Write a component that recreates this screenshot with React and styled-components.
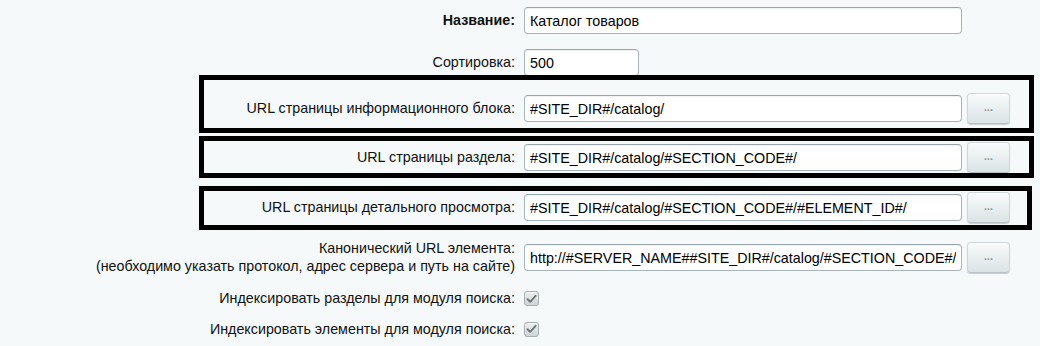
import React from 'react';
import styled, { createGlobalStyle } from 'styled-components';

const GlobalStyle = createGlobalStyle`
  html, body {
    margin: 0;
    padding: 0;
    background: #f5f9f9;
  }
  body {
    font-family: "Liberation Sans", Arial, sans-serif;
    font-size: 14.3px;
    color: #000;
  }
`;

const Form = styled.div`
  display: flex;
  flex-direction: column;
  align-items: flex-start;
  padding-top: 7px;
  width: 1040px;
  height: 346px;
  box-sizing: border-box;
  overflow: hidden;
`;

const Row = styled.div`
  display: grid;
  grid-template-columns: ${p => p.$label || 515}px auto;
  column-gap: 9px;
  align-items: center;
  margin-top: ${p => p.$top || 0}px;
`;

const Label = styled.label`
  text-align: right;
  line-height: 17.5px;
  color: #111;
  font-weight: ${p => (p.$bold ? 'bold' : 'normal')};
  white-space: nowrap;
`;

const Fields = styled.div`
  display: flex;
  align-items: center;
  gap: 5px;
`;

const TextInput = styled.input`
  box-sizing: border-box;
  width: ${p => p.$width || 438}px;
  height: 27px;
  padding: 0 5px;
  font-family: "Liberation Sans", Arial, sans-serif;
  font-size: 14.3px;
  color: #000;
  background: #fff;
  border: 1px solid #a7b5bb;
  border-top-color: #98a6ac;
  border-radius: 4px;
  box-shadow: inset 0 1px 1px rgba(0, 0, 0, 0.06);
  outline: none;
`;

const DotsButton = styled.button`
  box-sizing: border-box;
  width: 43px;
  height: ${p => p.$height || 31}px;
  padding: 0 0 4px;
  font-family: "Liberation Sans", Arial, sans-serif;
  font-size: 11px;
  font-weight: bold;
  color: #8a9497;
  background: linear-gradient(#f9fbfb, #e9eff0 50%, #dbe3e5);
  border: 1px solid #cdd6d9;
  border-bottom-color: #b8c2c6;
  border-radius: 4px;
  box-shadow: 0 1px 1px rgba(0, 0, 0, 0.18), inset 0 1px 0 #fff;
  cursor: pointer;
`;

const Highlight = styled.div`
  box-sizing: border-box;
  margin-left: 199px;
  margin-top: ${p => p.$top || 0}px;
  width: ${p => p.$width || 835}px;
  border: 5px solid #000;
  padding: ${p => p.$pad};
`;

const Check = styled.span`
  box-sizing: border-box;
  display: inline-flex;
  align-items: center;
  justify-content: center;
  width: 15px;
  height: 15px;
  border: 1px solid #a6aeb0;
  border-radius: 3px;
  background: linear-gradient(#eceff0, #cfd5d6);
  box-shadow: inset 0 1px 0 rgba(255, 255, 255, 0.6);
`;

const CheckBox = () => (
  <Check>
    <svg width="11" height="10" viewBox="0 0 11 10">
      <path d="M1.5 5.2 L4.2 7.8 L9.6 1.8" fill="none" stroke="#6d7577" strokeWidth="1.9" strokeLinecap="round" strokeLinejoin="round" />
    </svg>
  </Check>
);

const UrlRow = ({ label, value }) => (
  <Row $label={311}>
    <Label>{label}</Label>
    <Fields>
      <TextInput readOnly defaultValue={value} />
      <DotsButton>...</DotsButton>
    </Fields>
  </Row>
);

const App = () => {
  return (
    <>
      <GlobalStyle />
      <Form>
        <Row>
          <Label $bold>Название:</Label>
          <Fields>
            <TextInput readOnly defaultValue="Каталог товаров" />
          </Fields>
        </Row>
        <Row $top={15}>
          <Label>Сортировка:</Label>
          <Fields>
            <TextInput readOnly $width={115} defaultValue="500" />
          </Fields>
        </Row>

        <Highlight $top={-1} $pad="13px 0 4px">
          <UrlRow label="URL страницы информационного блока:" value="#SITE_DIR#/catalog/" />
        </Highlight>
        <Highlight $top={3} $pad="1px 0 0">
          <UrlRow label="URL страницы раздела:" value="#SITE_DIR#/catalog/#SECTION_CODE#/" />
        </Highlight>
        <Highlight $top={8} $width={833} $pad="1px 0 2px">
          <UrlRow label="URL страницы детального просмотра:" value="#SITE_DIR#/catalog/#SECTION_CODE#/#ELEMENT_ID#/" />
        </Highlight>

        <Row $top={10}>
          <Label>
            Канонический URL элемента:<br />
            (необходимо указать протокол, адрес сервера и путь на сайте)
          </Label>
          <Fields>
            <TextInput readOnly defaultValue="http://#SERVER_NAME##SITE_DIR#/catalog/#SECTION_CODE#/#ELEMENT_CODE#/" />
            <DotsButton>...</DotsButton>
          </Fields>
        </Row>
        <Row $top={15}>
          <Label>Индексировать разделы для модуля поиска:</Label>
          <CheckBox />
        </Row>
        <Row $top={13}>
          <Label>Индексировать элементы для модуля поиска:</Label>
          <CheckBox />
        </Row>
      </Form>
    </>
  );
};

export default App;
